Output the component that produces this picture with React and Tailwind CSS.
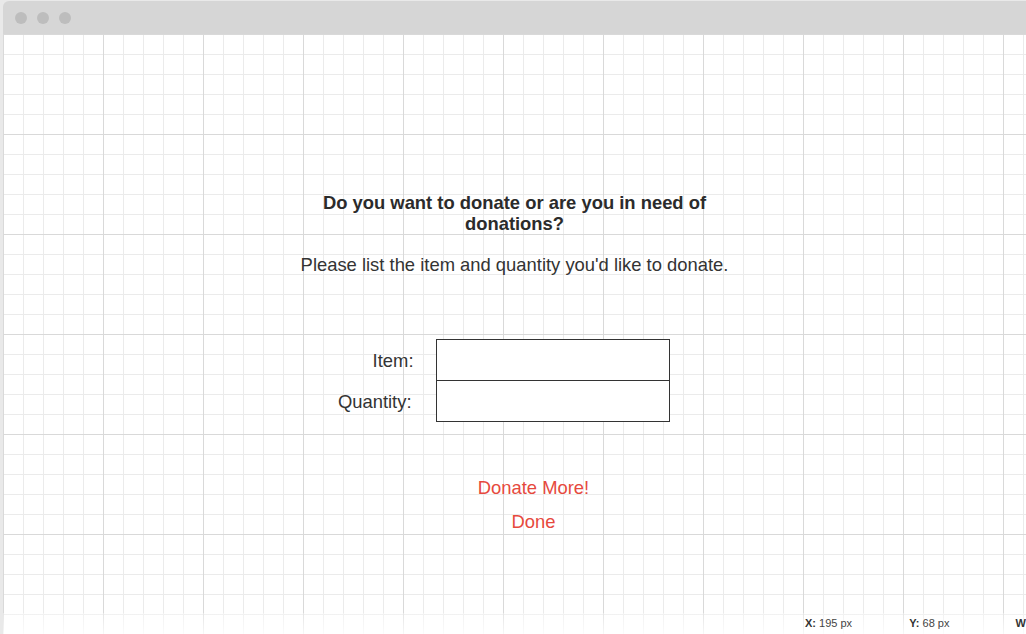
export default function App() {
  return (
    <div className="flex h-[634px] w-[1026px] flex-col overflow-hidden bg-[#e9e9e9] pl-[3px] pt-[1px] font-['Liberation_Sans',Arial,sans-serif] text-[#2f2f2f]">
      <div className="flex h-[33px] shrink-0 items-center gap-[10px] rounded-tl-[6px] bg-[#d6d6d6] pl-[12px]">
        <span className="h-[12px] w-[12px] rounded-full bg-[#bdbdbd]" />
        <span className="h-[12px] w-[12px] rounded-full bg-[#bdbdbd]" />
        <span className="h-[12px] w-[12px] rounded-full bg-[#bdbdbd]" />
      </div>

      <main className="relative flex flex-1 flex-col items-center bg-white bg-[linear-gradient(to_right,#d9d9d9_1px,transparent_1px),linear-gradient(to_bottom,#d9d9d9_1px,transparent_1px),linear-gradient(to_right,#ebebeb_1px,transparent_1px),linear-gradient(to_bottom,#ebebeb_1px,transparent_1px)] pt-[158px] [background-size:100px_100px,100px_100px,20px_20px,20px_20px]">
        <h1 className="w-[400px] text-center text-[18.4px] font-bold leading-[21px] text-[#2b2b2b]">
          Do you want to donate or are you in need of donations?
        </h1>
        <p className="mt-[20px] text-[18.4px] leading-[21px] text-[#333]">
          Please list the item and quantity you'd like to donate.
        </p>

        <form className="mt-[64px] grid grid-cols-[130px_234px] gap-x-[22px] pr-[76px] text-[18.4px] leading-[21px]">
          <label className="flex items-center justify-end text-[#333]">Item:</label>
          <input className="h-[42px] border border-[#333] bg-white px-2 outline-none" />
          <label className="flex items-center justify-end pr-[2px] text-[#333]">Quantity:</label>
          <input className="-mt-px h-[42px] border border-[#333] bg-white px-2 outline-none" />
        </form>

        <button className="mt-[55px] pl-[38px] text-[18.4px] leading-[21px] text-[#e6493d]">Donate More!</button>
        <button className="mt-[13px] pl-[38px] text-[18.4px] leading-[21px] text-[#e6493d]">Done</button>

        <div className="absolute inset-x-0 bottom-0 flex h-[21px] items-center bg-[linear-gradient(to_bottom,rgba(255,255,255,0.3),rgba(255,255,255,0.8))] pl-[802px] text-[11px] text-[#444]">
          <span className="w-[105px]"><b className="text-[#333]">X:</b> 195 px</span>
          <span className="w-[107px]"><b className="text-[#333]">Y:</b> 68 px</span>
          <b className="text-[#333]">W</b>
        </div>
      </main>
    </div>
  );
}
